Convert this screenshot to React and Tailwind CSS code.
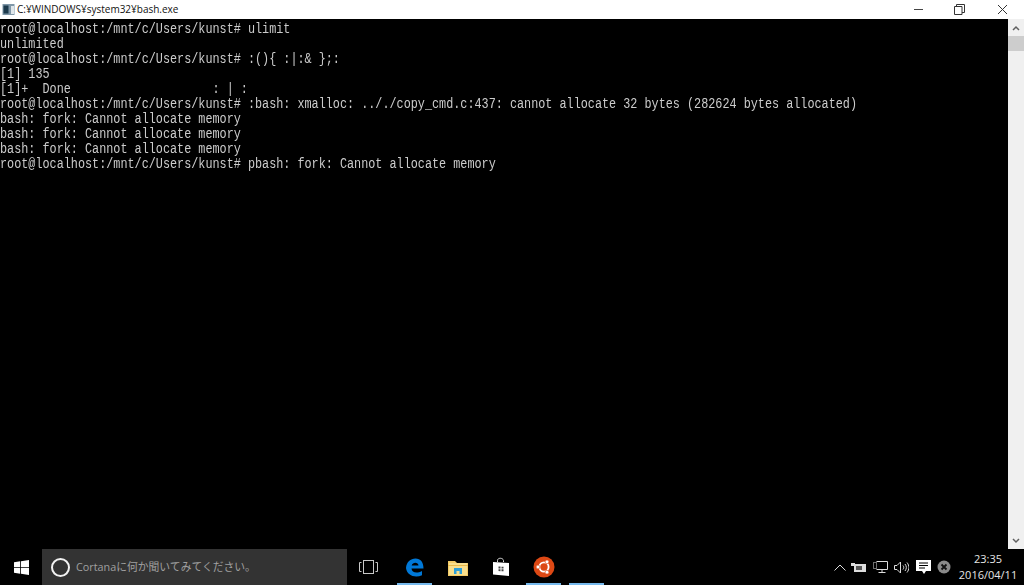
const LINES = [
  "root@localhost:/mnt/c/Users/kunst# ulimit",
  "unlimited",
  "root@localhost:/mnt/c/Users/kunst# :(){ :|:& };:",
  "[1] 135",
  "[1]+  Done                    : | :",
  "root@localhost:/mnt/c/Users/kunst# :bash: xmalloc: .././copy_cmd.c:437: cannot allocate 32 bytes (282624 bytes allocated)",
  "bash: fork: Cannot allocate memory",
  "bash: fork: Cannot allocate memory",
  "bash: fork: Cannot allocate memory",
  "root@localhost:/mnt/c/Users/kunst# pbash: fork: Cannot allocate memory",
];

function Underline({ on, children }) {
  return (
    <div className="relative w-[43px] h-full flex items-center justify-center">
      {children}
      {on && <div className="absolute bottom-0 left-[4px] right-[4px] h-[2px] bg-[#76b9ed]" />}
    </div>
  );
}

export default function App() {
  return (
    <div className="w-[1024px] h-[585px] flex flex-col bg-black overflow-hidden font-['Liberation_Sans',sans-serif]">
      <div className="h-[19px] bg-white flex items-center shrink-0">
        <svg width="13" height="13" viewBox="0 0 13 13" className="ml-[2px]">
          <rect x="0.5" y="1" width="12" height="11" fill="#7f97a8" />
          <rect x="1.5" y="2.5" width="5" height="8" fill="#1c3a4c" />
          <rect x="9" y="3" width="3" height="8" fill="#dfe6ea" />
        </svg>
        <span className="ml-[2px] text-[10px] leading-[19px] text-[#111] font-['Open_Sans','Noto_Sans_CJK_JP',sans-serif]">C:¥WINDOWS¥system32¥bash.exe</span>
        <div className="ml-auto flex items-center h-full">
          <div className="w-[41px] flex justify-center">
            <svg width="11" height="11" viewBox="0 0 11 11"><path d="M1 5.5h9" stroke="#444" strokeWidth="1" /></svg>
          </div>
          <div className="w-[41px] flex justify-center">
            <svg width="11" height="11" viewBox="0 0 11 11" fill="none" stroke="#333"><path d="M0.5 2.5h7.500v8h-7.500zM2.500 2.500v-2h8v8h-2.500" /></svg>
          </div>
          <div className="w-[44px] flex justify-center">
            <svg width="11" height="11" viewBox="0 0 11 11" fill="none" stroke="#333"><path d="M1 1l9 9M10 1l-9 9" /></svg>
          </div>
        </div>
      </div>

      <div className="flex-1 flex min-h-0">
        <div className="flex-1 pt-[3px] overflow-hidden blur-[0.3px]">
          {LINES.map((l, i) => (
            <div key={i} className="h-[15px] leading-[15px] text-[14px] whitespace-pre text-[#cccccc] origin-left scale-x-[0.843] font-['Liberation_Mono',monospace]">
              {l}
            </div>
          ))}
        </div>
        <div className="w-[16px] bg-[#f0f0f0] flex flex-col items-center shrink-0">
          <div className="h-[17px] flex items-center justify-center">
            <svg width="8" height="6" viewBox="0 0 8 6" fill="none" stroke="#606060" strokeWidth="1.5"><path d="M1 5l3-3 3 3" /></svg>
          </div>
          <div className="w-full h-[15px] bg-[#cdcdcd]" />
          <div className="flex-1" />
          <div className="h-[17px] flex items-center justify-center">
            <svg width="8" height="6" viewBox="0 0 8 6" fill="none" stroke="#606060" strokeWidth="1.5"><path d="M1 1l3 3 3-3" /></svg>
          </div>
        </div>
      </div>

      <div className="h-[36px] bg-black flex items-center shrink-0">
        <div className="w-[42px] flex justify-center">
          <svg width="15" height="15" viewBox="0 0 15 15" fill="#fff"><path d="M0 2.200L6.200 1.300V7H0zM7 1.200L15 0V7H7zM0 7.800H6.200V13.700L0 12.800zM7 7.800H15V15L7 13.800z" /></svg>
        </div>
        <div className="w-[305px] h-full bg-[#333333] flex items-center">
          <div className="ml-[9px] w-[19px] h-[19px] rounded-full border-[2.5px] border-[#f2f2f2]" />
          <span className="ml-[6px] text-[10.8px] text-[#a0a0a0] font-['Open_Sans','Noto_Sans_CJK_JP',sans-serif]">Cortanaに何か聞いてみてください。</span>
        </div>
        <div className="ml-[12px] w-[19px] flex justify-center">
          <svg width="19" height="14" viewBox="0 0 19 14" fill="none" stroke="#c8c8c8"><rect x="4.500" y="0.500" width="10" height="13" /><path d="M2.500 2.500H0.500V11.500H2.500M16.500 2.500H18.500V11.500H16.500" /></svg>
        </div>
        <div className="ml-[15px] flex h-full">
          <Underline on>
            <svg width="19" height="19" viewBox="0 0 19 19" className="mt-[1px]"><path d="M1 10C1.500 4 5.500 0.500 10.500 0.500C15.500 0.500 18.500 4 18.500 10.500H6.500C6.800 14.500 11.500 16 17 13V17.200C10.500 20 2 18 1 10ZM6.700 7.500H13.500C13.300 3.800 7.500 3.800 6.700 7.500Z" fill="#0078d7" /></svg>
          </Underline>
          <Underline>
            <svg width="20" height="17" viewBox="0 0 20 17"><path d="M0 2h7l2 2h11v13H0z" fill="#f3cb67" /><path d="M1 4h18v12H1z" fill="#f8df8e" /><path d="M6 9h8v6H11.500v-3h-3v3H6z" fill="#2d9fd8" /><rect x="0" y="6" width="20" height="1" fill="#e9b949" /></svg>
          </Underline>
          <Underline>
            <svg width="18" height="20" viewBox="0 0 18 20"><path d="M5.500 5V3.500C5.500 0.500 11 0.500 11.500 3.500V5" fill="none" stroke="#ddd" /><path d="M1 5l16 1v13L1 17.500z" fill="#fff" /><path d="M6.500 9.500l2 0.100v1.900h-2zM9.500 9.700l2 0.100v1.700h-2zM6.500 12.300h2v1.900l-2-0.100zM9.500 12.300h2v2l-2-0.100z" fill="#444" /></svg>
          </Underline>
          <Underline on>
            <svg width="22" height="22" viewBox="0 0 22 22">
              <circle cx="11" cy="11" r="10.500" fill="#dd4814" />
              <circle cx="11" cy="11" r="4.600" fill="none" stroke="#fff" strokeWidth="1.800" />
              <circle cx="5" cy="11" r="1.900" fill="#fff" stroke="#dd4814" strokeWidth="0.600" />
              <circle cx="14" cy="5.800" r="1.900" fill="#fff" stroke="#dd4814" strokeWidth="0.600" />
              <circle cx="14" cy="16.200" r="1.900" fill="#fff" stroke="#dd4814" strokeWidth="0.600" />
            </svg>
          </Underline>
          <Underline on />
        </div>
        <div className="ml-auto flex items-center h-full">
          <svg width="12" height="7" viewBox="0 0 12 7" fill="none" stroke="#ddd" className="mr-[5px]"><path d="M0.500 6.500L6 1l5.500 5.500" /></svg>
          <svg width="15" height="11" viewBox="0 0 15 11" className="mr-[7px]" fill="#ddd"><rect x="3" y="2" width="12" height="8" /><rect x="0" y="1" width="4" height="3" /><rect x="5" y="4" width="6" height="4" fill="#555" /></svg>
          <svg width="15" height="13" viewBox="0 0 15 13" fill="none" stroke="#ddd" className="mr-[6px]"><path d="M3.500 0.500h11v8h-11M9 8.500v3M5.500 11.500h7" /><rect x="0.500" y="1.500" width="3" height="6" strokeDasharray="1 1" /></svg>
          <svg width="15" height="13" viewBox="0 0 15 13" fill="none" stroke="#ddd" className="mr-[7px]"><path d="M0.500 4.500h2.500l3.500-3.500v11l-3.500-3.500h-2.500z" /><path d="M9 4.500c1 1.300 1 2.700 0 4M11 3c1.800 2.300 1.800 4.700 0 7M13 1.500c2.500 3.300 2.500 6.700 0 10" /></svg>
          <svg width="15" height="14" viewBox="0 0 15 14" className="mr-[6px]"><path d="M0 0h15v11h-5l-2 3-2-3H0z" fill="#fff" /><path d="M3 3h9M3 5.500h9M3 8h6" stroke="#000" /></svg>
          <svg width="14" height="14" viewBox="0 0 14 14" className="mr-[5px]"><circle cx="7" cy="7" r="6.500" fill="#8a8a8a" /><path d="M4.500 4.500l5 5M9.500 4.500l-5 5" stroke="#111" strokeWidth="1.800" /></svg>
          <div className="w-[64px] flex flex-col items-center text-[11px] leading-[16px] text-[#e6e6e6] font-['Open_Sans',sans-serif] mr-[4px]">
            <span>23:35</span>
            <span>2016/04/11</span>
          </div>
        </div>
      </div>
    </div>
  );
}
